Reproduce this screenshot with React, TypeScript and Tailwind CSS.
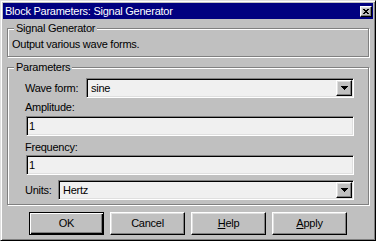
import { FC, ReactNode } from "react";

const raised =
  "bg-[#c0c0c0] border border-t-white border-l-white border-b-black border-r-black shadow-[inset_-1px_-1px_0_#808080,inset_1px_1px_0_#dfdfdf]";
const sunken =
  "bg-[#f0f0f0] border border-t-[#808080] border-l-[#808080] border-b-white border-r-white shadow-[inset_1px_1px_0_#000,inset_-1px_-1px_0_#dfdfdf]";

const Arrow = () => (
  <svg width="7" height="4" viewBox="0 0 7 4" shapeRendering="crispEdges">
    <path d="M0 0h7v1H0zM1 1h5v1H1zM2 2h3v1H2zM3 3h1v1H3z" fill="#000" />
  </svg>
);

const CloseGlyph = () => (
  <svg width="6" height="5" viewBox="0 0 6 5" shapeRendering="crispEdges">
    <path
      d="M0 0h2v1H0zM4 0h2v1H4zM1 1h4v1H1zM2 2h2v1H2zM1 3h4v1H1zM0 4h2v1H0zM4 4h2v1H4z"
      fill="#000"
    />
  </svg>
);

const Combo: FC<{ value: string }> = ({ value }) => (
  <div className={`${sunken} flex-1 h-[20px] p-px flex items-stretch`}>
    <div className="flex-1 pl-[3px] leading-[16px]">{value}</div>
    <div className={`${raised} w-[16px] flex items-center justify-center`}>
      <Arrow />
    </div>
  </div>
);

const Field: FC<{ value: string }> = ({ value }) => (
  <div className={`${sunken} h-[20px] p-px pl-[2px] leading-[16px]`}>{value}</div>
);

const Group: FC<{ title: string; className: string; children: ReactNode }> = ({
  title,
  className,
  children,
}) => (
  <div
    className={`relative border border-[#808080] shadow-[inset_1px_1px_0_#fff,1px_1px_0_#fff] ${className}`}
  >
    <span className="absolute left-[6px] top-[-7px] px-[2px] leading-[13px] bg-[#c0c0c0]">
      {title}
    </span>
    {children}
  </div>
);

const Button: FC<{ children: ReactNode; primary?: boolean }> = ({ children, primary }) => (
  <button
    type="button"
    className={
      primary
        ? "w-[75px] h-[23px] bg-[#c0c0c0] border border-black shadow-[inset_1px_1px_0_#fff,inset_-1px_-1px_0_#000,inset_-2px_-2px_0_#808080]"
        : `w-[75px] h-[23px] ${raised}`
    }
  >
    {children}
  </button>
);

export default function App() {
  return (
    <div className="w-[376px] h-[241px] bg-[#c0c0c0] border border-t-[#dfdfdf] border-l-[#dfdfdf] border-b-black border-r-black shadow-[inset_1px_1px_0_#fff,inset_-1px_-1px_0_#808080] p-[2px] flex flex-col font-['Liberation_Sans',Arial,sans-serif] text-[11px] tracking-[-0.25px] text-black">
      <div className="h-[16px] shrink-0 bg-[#000080] flex items-center pl-[2px] pr-[1px] text-white">
        <span className="flex-1 leading-[13px]">Block Parameters: Signal Generator</span>
        <div className={`${raised} w-[12px] h-[11px] flex items-center justify-center`}>
          <CloseGlyph />
        </div>
      </div>

      <div className="px-[4px]">
        <Group title="Signal Generator" className="mt-[9px] h-[29px] pl-[4px] pt-[9px]">
          <div className="leading-[13px]">Output various wave forms.</div>
        </Group>

        <Group title="Parameters" className="mt-[10px] h-[138px] pl-[17px] pr-[14px] pt-[10px]">
          <div className="flex items-center">
            <span className="w-[61px]">Wave form:</span>
            <Combo value="sine" />
          </div>
          <div className="mt-[3px] leading-[13px]">Amplitude:</div>
          <div className="mt-[2px] ml-[1px]">
            <Field value="1" />
          </div>
          <div className="mt-[5px] leading-[13px]">Frequency:</div>
          <div className="mt-px ml-[1px]">
            <Field value="1" />
          </div>
          <div className="mt-[5px] flex items-center">
            <span className="w-[33px]">Units:</span>
            <Combo value="Hertz" />
          </div>
        </Group>
      </div>

      <div className="mt-[7px] flex justify-center gap-[6px]">
        <Button primary>OK</Button>
        <Button>Cancel</Button>
        <Button>
          <u>H</u>elp
        </Button>
        <Button>
          <u>A</u>pply
        </Button>
      </div>
    </div>
  );
}
